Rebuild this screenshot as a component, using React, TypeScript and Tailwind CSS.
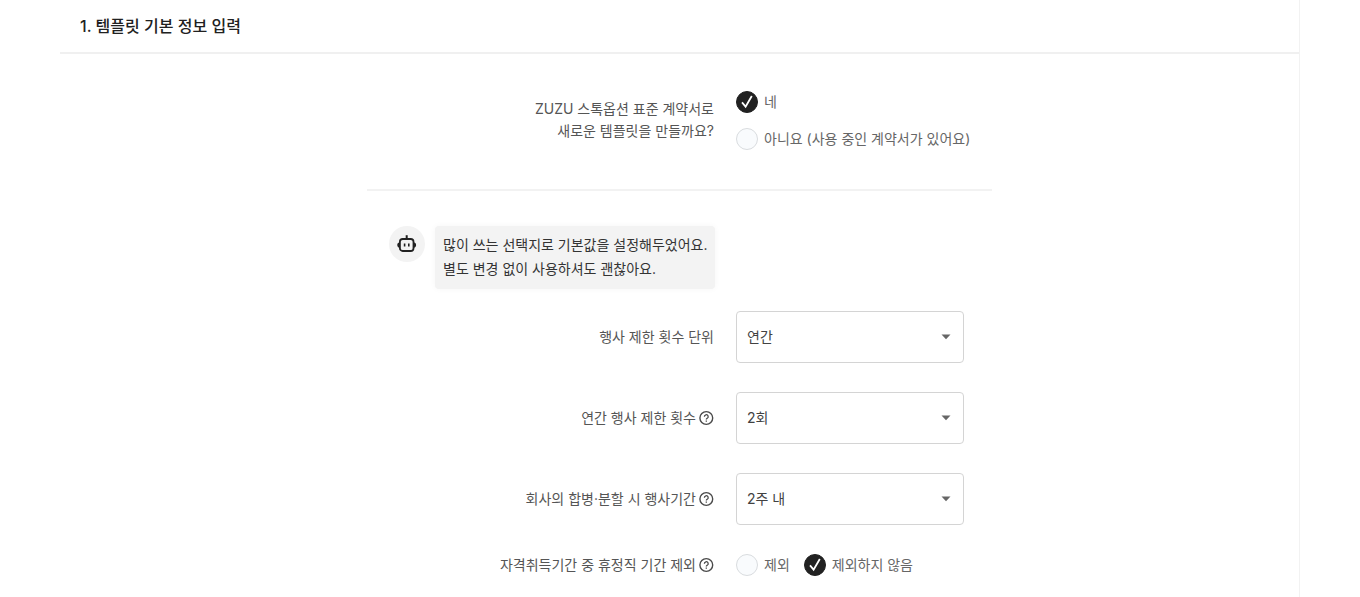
import { useState } from "react";
import type { ReactNode } from "react";

type RadioProps = {
  name: string;
  label: string;
  checked: boolean;
  onChange: () => void;
};

function Radio({ name, label, checked, onChange }: RadioProps) {
  return (
    <label className="flex cursor-pointer items-center gap-1.5 text-[#666666]">
      <span className="relative flex">
        <input
          type="radio"
          name={name}
          checked={checked}
          onChange={onChange}
          className="size-[22px] cursor-pointer appearance-none rounded-full border border-[#d9dcdf] bg-[#f9fbfd] checked:border-[#212121] checked:bg-[#212121]"
        />
        {checked && (
          <svg
            viewBox="0 0 22 22"
            className="pointer-events-none absolute inset-0 size-[22px]"
            fill="none"
            stroke="#ffffff"
            strokeWidth="1.8"
            aria-hidden="true"
          >
            <path d="M6 11.4 9.6 15.6 15.8 5" />
          </svg>
        )}
      </span>
      <span>{label}</span>
    </label>
  );
}

function HelpButton({ label }: { label: string }) {
  return (
    <button type="button" aria-label={label} className="flex cursor-pointer">
      <svg viewBox="0 0 16 16" className="size-4" fill="none" stroke="#4a4a4a" aria-hidden="true">
        <circle cx="8.3" cy="8" r="6.4" strokeWidth="1.4" />
        <path d="M6.4 6.8a1.9 1.9 0 1 1 2.8 1.5c-.6.4-.9.7-.9 1.3" strokeWidth="1.3" />
        <path d="M8.3 10.5v1.3" strokeWidth="1.3" />
      </svg>
    </button>
  );
}

type SelectRowProps = {
  id: string;
  label: string;
  options: string[];
  defaultValue: string;
  help?: boolean;
};

function SelectRow({ id, label, options, defaultValue, help }: SelectRowProps) {
  return (
    <Row
      label={
        <>
          <label htmlFor={id}>{label}</label>
          {help && <HelpButton label={`${label} 도움말`} />}
        </>
      }
    >
      <div className="relative w-[228px]">
        <select
          id={id}
          defaultValue={defaultValue}
          className="h-13 w-full appearance-none rounded border border-[#d4d4d4] bg-white px-2.5 text-[#424242]"
        >
          {options.map((option) => (
            <option key={option}>{option}</option>
          ))}
        </select>
        <svg
          viewBox="0 0 10 6"
          className="pointer-events-none absolute top-[23px] right-[13px] h-[6px] w-[10px]"
          fill="#666666"
          aria-hidden="true"
        >
          <path d="M.5.5h9L5 5.2z" />
        </svg>
      </div>
    </Row>
  );
}

function Row({ label, children }: { label: ReactNode; children: ReactNode }) {
  return (
    <div className="flex items-center gap-[22px]">
      <div className="flex flex-[347] items-center justify-end gap-0.5 text-right text-[#555555]">
        {label}
      </div>
      <div className="flex-[256]">{children}</div>
    </div>
  );
}

function BotIcon() {
  return (
    <svg viewBox="0 0 20 20" className="size-5" fill="none" stroke="#212121" aria-hidden="true">
      <rect x="2.9" y="5" width="13.6" height="12" rx="2.8" strokeWidth="1.8" />
      <path d="M9.7 5V1.2" strokeWidth="2" />
      <path d="M2.6 8.2C.9 8.6.3 9.6.3 11s.6 2.4 2.3 2.8zM16.8 8.2c1.7.4 2.3 1.4 2.3 2.8s-.6 2.4-2.3 2.8z" fill="#212121" stroke="none" />
      <path d="M7.6 9.5v2.9M11.8 9.5v2.9" strokeWidth="1.6" />
    </svg>
  );
}

export default function App() {
  const [standard, setStandard] = useState(true);
  const [exclude, setExclude] = useState(false);

  return (
    <main className="min-h-screen bg-white px-[60px] font-['Inter','Noto_Sans_CJK_KR',sans-serif] text-sm text-[#424242]">
      <section className="min-h-screen border-r border-[#f2f2f2]">
        <header className="border-b-2 border-[#f0f0f0] px-5 py-3.5">
          <h1 className="text-base font-medium text-[#212121]">1. 템플릿 기본 정보 입력</h1>
        </header>

        <form className="mx-auto max-w-[625px] pt-[37px]">
          {/* Contract source */}
          <div className="border-b-2 border-[#f2f2f2] pb-[39px]">
            <div className="flex items-start gap-[22px]">
              <p className="flex-[347] pt-[7px] text-right leading-[22px] text-[#555555]">
                ZUZU 스톡옵션 표준 계약서로
                <br />
                새로운 템플릿을 만들까요?
              </p>
              <div className="flex flex-[256] flex-col gap-[15px] leading-[22px]">
                <Radio
                  name="standard"
                  label="네"
                  checked={standard}
                  onChange={() => setStandard(true)}
                />
                <Radio
                  name="standard"
                  label="아니요 (사용 중인 계약서가 있어요)"
                  checked={!standard}
                  onChange={() => setStandard(false)}
                />
              </div>
            </div>
          </div>

          {/* Assistant message */}
          <div className="flex items-start gap-2.5 pt-[35px] pl-[22px]">
            <div className="flex size-9 items-center justify-center rounded-full bg-[#f3f3f3]">
              <BotIcon />
            </div>
            <p className="w-[280px] rounded bg-[#f3f3f3] px-2 pt-[7px] pb-2 leading-6 whitespace-nowrap text-[#333333] shadow-[0_0_6px_rgba(0,0,0,0.04)]">
              많이 쓰는 선택지로 기본값을 설정해두었어요.
              <br />
              별도 변경 없이 사용하셔도 괜찮아요.
            </p>
          </div>

          <div className="flex flex-col gap-[29px] pt-[22px] pb-5">
            <SelectRow
              id="limit-unit"
              label="행사 제한 횟수 단위"
              options={["연간", "월간", "제한 없음"]}
              defaultValue="연간"
            />
            <SelectRow
              id="limit-count"
              label="연간 행사 제한 횟수"
              options={["1회", "2회", "3회", "4회"]}
              defaultValue="2회"
              help
            />
            <SelectRow
              id="merger-period"
              label="회사의 합병·분할 시 행사기간"
              options={["1주 내", "2주 내", "4주 내"]}
              defaultValue="2주 내"
              help
            />
            <Row
              label={
                <>
                  <span id="leave-label">자격취득기간 중 휴정직 기간 제외</span>
                  <HelpButton label="휴정직 기간 제외 도움말" />
                </>
              }
            >
              <div role="radiogroup" aria-labelledby="leave-label" className="flex gap-3.5">
                <Radio
                  name="leave"
                  label="제외"
                  checked={exclude}
                  onChange={() => setExclude(true)}
                />
                <Radio
                  name="leave"
                  label="제외하지 않음"
                  checked={!exclude}
                  onChange={() => setExclude(false)}
                />
              </div>
            </Row>
          </div>
        </form>
      </section>
    </main>
  );
}
